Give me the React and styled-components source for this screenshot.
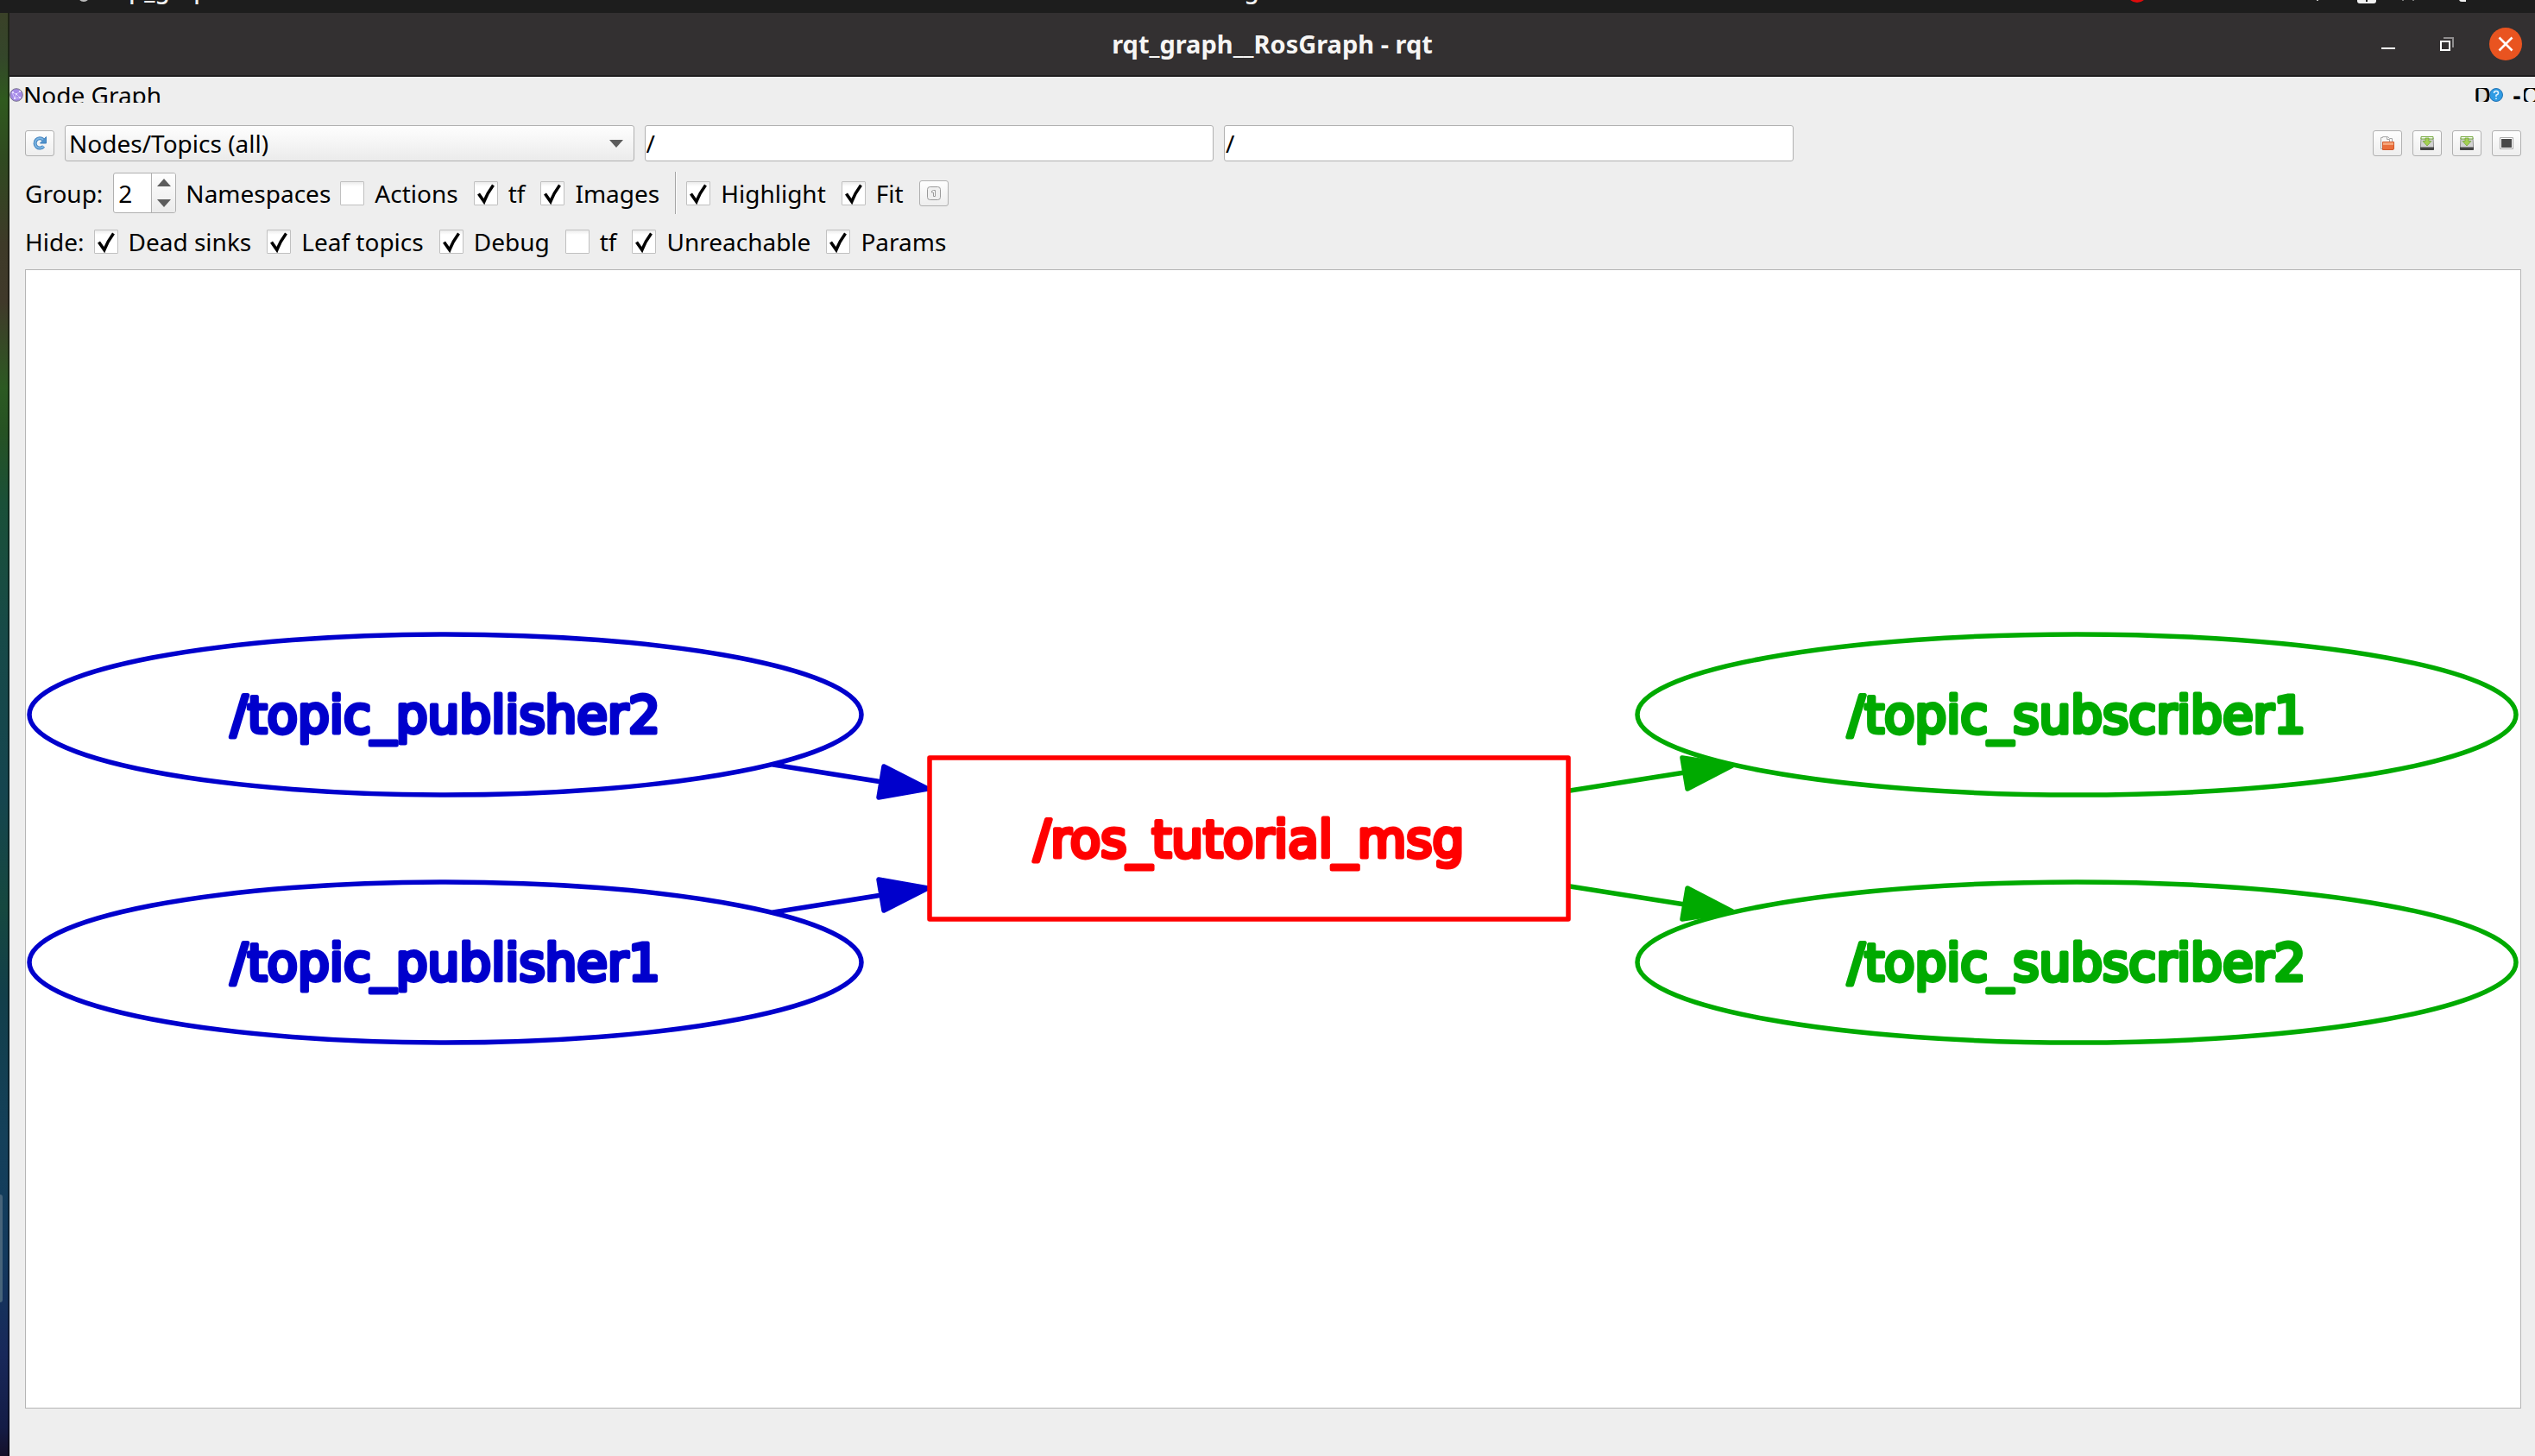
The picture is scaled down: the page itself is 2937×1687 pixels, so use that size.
import React from "react";
import styled, { createGlobalStyle, css } from "styled-components";

const GlobalStyle = createGlobalStyle`
  * { box-sizing: border-box; }
  html, body, #root { height: 100%; margin: 0; }
  body {
    overflow: hidden;
    background: #1d1d1d;
    color: #000;
    font: 28px/36px "Noto Sans", "Open Sans", sans-serif;
  }
  button, input, select { font: inherit; color: inherit; margin: 0; }
`;

const Desktop = styled.div`
  display: flex;
  flex-direction: column;
  height: 100vh;
`;

const SystemBar = styled.header`
  flex: none;
  display: grid;
  grid-template-columns: 1fr auto 1fr;
  grid-template-rows: 100%;
  align-items: end;
  height: 15px;
  padding: 0 80px 10px 90px;
  overflow: hidden;
  background: #1d1d1d;
  color: #f2f2f2;
`;

const BarGroup = styled.div`
  display: flex;
  align-items: flex-end;
  gap: 24px;
  justify-content: ${(p) => (p.$end ? "flex-end" : "flex-start")};
  font-weight: 500;
  line-height: 36px;
`;

const Clock = styled(BarGroup)`
  min-width: 136px;
`;

const TrayDrawing = styled.svg`
  display: block;
  width: 460px;
  height: 15px;
  margin-bottom: -10px;
`;

const Workspace = styled.div`
  flex: 1;
  display: flex;
  min-height: 0;
`;

const Wallpaper = styled.aside`
  flex: none;
  display: flex;
  align-items: flex-start;
  width: 11px;
  border-right: 2px solid rgba(0, 0, 0, 0.45);
  background: linear-gradient(
    #3a4128 0%, #34462a 3%, #2f5a1e 6%, #2f4a20 10%, #3e3a28 16%, #40392a 20%,
    #2c5a22 26%, #265223 29%, #1a5038 34%, #174a48 43%, #15454f 54%, #16483f 62%,
    #123f4a 68%, #14405a 78%, #133a5e 86%, #18285a 93%, #141c46 98%, #15102a 100%
  );
`;

const DockEdge = styled.div`
  width: 3px;
  height: 125px;
  margin-top: 1369px;
  border-radius: 0 4px 4px 0;
  background: #47647a;
`;

const Window = styled.main`
  flex: 1;
  display: flex;
  flex-direction: column;
  min-width: 0;
  background: #eeeeee;
`;

const TitleBar = styled.div`
  flex: none;
  display: grid;
  grid-template-columns: 1fr auto 1fr;
  align-items: center;
  height: 74px;
  padding: 0 15px;
  background: #333031;
  border-bottom: 2px solid #1f1d1e;
  color: #f6f5f4;
`;

const Title = styled.h1`
  grid-column: 2;
  margin: 0;
  font-size: 29px;
  font-weight: 700;
`;

const WindowButtons = styled.div`
  display: flex;
  justify-content: flex-end;
  gap: 30px;
`;

const WindowButton = styled.button`
  width: 38px;
  height: 38px;
  padding: 0;
  border: 0;
  border-radius: 50%;
  background: ${(p) => (p.$close ? "#e95420" : "transparent")};
  svg { display: block; }
`;

const DockTitle = styled.div`
  flex: none;
  display: flex;
  align-items: center;
  height: 18px;
  margin-top: 12px;
  overflow: hidden;
`;

const DockName = styled.span`
  flex: 1;
  line-height: 18px;
`;

const DockButtons = styled.div`
  display: flex;
  align-items: center;
  margin-right: -3px;
`;

const DockButton = styled.button`
  display: flex;
  align-items: center;
  justify-content: center;
  width: 16px;
  height: 16px;
  padding: 0;
  border: 0;
  border-radius: 3px;
  overflow: hidden;
  font-weight: ${(p) => (p.$spaced ? "700" : "500")};
  line-height: 16px;
  background: ${(p) => (p.$raised ? "#dcdcdc" : "transparent")};
  margin-left: ${(p) => (p.$spaced ? "8px" : "0")};
`;

const Content = styled.div`
  flex: 1;
  display: flex;
  flex-direction: column;
  min-height: 0;
  padding: 26px 16px 55px 18px;
`;

const FilterRow = styled.div`
  display: flex;
  align-items: center;
  height: 42px;
`;

const FilterFields = styled.div`
  flex: 1;
  display: grid;
  grid-template-columns: repeat(4, 1fr);
  gap: 12px;
  margin-left: 12px;
`;

const field = css`
  width: 100%;
  height: 42px;
  border: 1px solid #b0b0b0;
  border-radius: 3px;
  outline: 0;
`;

const SelectWrap = styled.div`
  display: grid;
  align-items: center;
  svg { grid-area: 1 / 1; justify-self: end; margin-right: 13px; pointer-events: none; }
`;

const GraphSelect = styled.select`
  ${field}
  grid-area: 1 / 1;
  appearance: none;
  padding: 0 4px;
  background: linear-gradient(#fefefe, #ebebeb);
`;

const TextField = styled.input`
  ${field}
  padding: 0 1px;
  background: #fff;
`;

const ToolButtons = styled.div`
  display: flex;
  gap: 12px;
`;

const ToolButton = styled.button`
  flex: none;
  display: flex;
  align-items: center;
  justify-content: center;
  width: 34px;
  height: 30px;
  padding: 0;
  border: 1px solid #b0b0b0;
  border-radius: 3px;
  background: linear-gradient(#fefefe, #eeeeee);
`;

const OptionRow = styled.div`
  display: flex;
  align-items: center;
  gap: 18px;
  height: ${(p) => p.$height};
  margin-top: ${(p) => p.$top};
`;

const SpinBox = styled.div`
  display: flex;
  width: 73px;
  height: 47px;
  border: 1px solid #b0b0b0;
  border-radius: 3px;
  overflow: hidden;
  background: #fff;
`;

const SpinInput = styled.input`
  flex: 1;
  min-width: 0;
  padding: 0 5px;
  border: 0;
  outline: 0;
  background: transparent;
`;

const SpinArrows = styled.div`
  display: flex;
  flex-direction: column;
  width: 28px;
  border-left: 1px solid #b0b0b0;
  background: linear-gradient(#fefefe, #ebebeb);
`;

const SpinArrow = styled.button`
  flex: 1;
  display: flex;
  align-items: center;
  justify-content: center;
  padding: 0;
  border: 0;
  background: transparent;
`;

const CheckLabel = styled.label`
  display: flex;
  align-items: center;
  gap: 12px;
  white-space: nowrap;
`;

const CheckBox = styled.span`
  display: grid;
  width: 28px;
  height: 28px;
  border: 1px solid #c0c0c0;
  border-radius: 1px;
  background: linear-gradient(#ececec, #ffffff 5px);
  input { grid-area: 1 / 1; appearance: none; width: 26px; height: 26px; margin: 0; }
  svg { grid-area: 1 / 1; pointer-events: none; visibility: hidden; }
  input:checked + svg { visibility: visible; }
`;

const Divider = styled.div`
  width: 2px;
  height: 49px;
  border-left: 1px solid #a4a4a4;
  border-right: 1px solid #fafafa;
`;

const OptionGroup = styled.div`
  display: flex;
  align-items: center;
  gap: 11px;
`;

const GraphView = styled.section`
  flex: 1;
  min-height: 0;
  margin-top: 14px;
  border: 1px solid #b5b5b5;
  background: #fff;
`;

const GraphDrawing = styled.svg`
  display: block;
  width: 100%;
  height: 100%;
`;

const NodeShape = styled.g`
  fill: none;
  stroke: ${(p) => p.$color};
  stroke-linejoin: round;
  stroke-linecap: round;
`;

const NodeLabel = styled.text`
  fill: ${(p) => p.$color};
  stroke: ${(p) => p.$color};
  stroke-width: 5px;
  stroke-linejoin: round;
  text-anchor: middle;
  font: 58px "DejaVu Sans", sans-serif;
`;

const BLUE = "#0000cc";
const GREEN = "#00aa00";
const RED = "#ff0000";

const NODES = [
  { name: "/topic_publisher2", x: 486, y: 515, rx: 482, color: BLUE },
  { name: "/topic_publisher1", x: 486, y: 802, rx: 482, color: BLUE },
  { name: "/topic_subscriber1", x: 2376, y: 515, rx: 509, color: GREEN },
  { name: "/topic_subscriber2", x: 2376, y: 802, rx: 509, color: GREEN },
];

const EDGES = [
  { color: BLUE, line: "M866 573L992 593", head: "994,575 1045,601 988,611" },
  { color: BLUE, line: "M866 744L992 724", head: "994,742 1045,716 988,706" },
  { color: GREEN, line: "M1789 603L1922 582", head: "1919,565 1977,574 1925,601" },
  { color: GREEN, line: "M1789 714L1922 735", head: "1919,752 1977,743 1925,716" },
];

function Triangle({ up }) {
  return (
    <svg width="16" height="10" viewBox="0 0 16 10" aria-hidden="true">
      <path d={up ? "M0 9L8 0L16 9Z" : "M0 1L8 10L16 1Z"} fill="#5c5c5c" />
    </svg>
  );
}

function Check({ label, checked }) {
  return (
    <CheckLabel>
      <CheckBox>
        <input type="checkbox" defaultChecked={checked} />
        <svg width="26" height="26" viewBox="0 0 26 26" aria-hidden="true">
          <path d="M4.500 13.500L10.800 22.500C13.500 15.500 17 9.500 21.500 3.500" fill="none" stroke="#000" strokeWidth="3.6" />
        </svg>
      </CheckBox>
      {label}
    </CheckLabel>
  );
}

function SaveIcon() {
  return (
    <svg width="16" height="16" viewBox="0 0 16 16" aria-hidden="true">
      <path d="M1 2H15L15.600 12V15Q15.600 15.600 15 15.600H1Q0.400 15.600 0.400 15V12Z" fill="#d2d2d2" stroke="#7d7d7d" strokeWidth="0.8" />
      <path d="M0 12.500H16V15Q16 16 15 16H1Q0 16 0 15Z" fill="#444" />
      <path d="M1 0.500H15V3H1Z" fill="#fff" stroke="#6fa537" />
      <path d="M6 2H10V5.500H13L8 11L3 5.500H6Z" fill="#a5d053" stroke="#6b9f30" strokeWidth="0.7" />
    </svg>
  );
}

export default function App() {
  return (
    <>
      <GlobalStyle />
      <Desktop>
        <SystemBar>
          <BarGroup>
            <svg width="14" height="20" viewBox="0 0 14 20" aria-hidden="true">
              <circle cx="7" cy="10" r="7" fill="#bdbdbd" />
            </svg>
            rqt_graph
          </BarGroup>
          <Clock>Aug</Clock>
          <BarGroup $end>
            <TrayDrawing viewBox="0 0 460 15" aria-hidden="true">
              <circle cx="79" cy="-9" r="12" fill="#e00b0b" />
              <rect x="287" y="-5" width="2" height="6" fill="#bbb" />
              <rect x="334" y="-12" width="22" height="16" rx="3" fill="#f2f2f2" />
              <path d="M344 0h2v2h-2z" fill="#1d1d1d" />
              <path d="M387 -2v3M399 -2v3" stroke="#777" strokeWidth="2" />
              <rect x="452" y="-12" width="18" height="14" rx="3" fill="#f2f2f2" />
            </TrayDrawing>
          </BarGroup>
        </SystemBar>
        <Workspace>
          <Wallpaper>
            <DockEdge />
          </Wallpaper>
          <Window>
            <TitleBar>
              <Title>rqt_graph__RosGraph - rqt</Title>
              <WindowButtons>
                <WindowButton aria-label="Minimize">
                  <svg width="38" height="38" viewBox="0 0 38 38">
                    <path d="M11 23H27V25H11Z" fill="#fff" />
                  </svg>
                </WindowButton>
                <WindowButton aria-label="Restore">
                  <svg width="38" height="38" viewBox="0 0 38 38">
                    <path d="M15 12H26V23" fill="none" stroke="#8f8d8e" strokeWidth="2" />
                    <path d="M12 16H22V26H12Z" fill="none" stroke="#fff" strokeWidth="2" />
                  </svg>
                </WindowButton>
                <WindowButton $close aria-label="Close">
                  <svg width="38" height="38" viewBox="0 0 38 38">
                    <path d="M11.500 11.500L26.500 26.500M26.500 11.500L11.500 26.500" stroke="#fff" strokeWidth="2.6" />
                  </svg>
                </WindowButton>
              </WindowButtons>
            </TitleBar>
            <DockTitle>
              <svg width="16" height="16" viewBox="0 0 16 16" aria-hidden="true">
                <circle cx="8" cy="8" r="7.300" fill="#a58ae6" stroke="#77728c" />
                <path d="M3 5L8 7L12 4M8 7L6 12L12 11L8 7M3 5L6 12" fill="none" stroke="#d9ccff" strokeWidth="0.8" />
                <path d="M3 4h2v2H3zM7 6h2v2H7zM11 3h2v2h-2zM5 11h2v2H5zM11 10h2v2h-2z" fill="#e6dcff" />
              </svg>
              <DockName>Node Graph</DockName>
              <DockButtons>
                <DockButton $raised>D</DockButton>
                <DockButton aria-label="Help">
                  <svg width="16" height="16" viewBox="0 0 16 16">
                    <circle cx="8" cy="8" r="7.500" fill="#2f9ce4" stroke="#2774b4" />
                    <path d="M5.500 6Q5.500 3.500 8 3.500T10.500 6Q10.500 7.500 8 8.300V10M8 11.500V13" fill="none" stroke="#e6f5ff" strokeWidth="1.5" />
                  </svg>
                </DockButton>
                <DockButton $spaced>-</DockButton>
                <DockButton>O</DockButton>
              </DockButtons>
            </DockTitle>
            <Content>
              <FilterRow>
                <ToolButton aria-label="Refresh">
                  <svg width="16" height="16" viewBox="0 0 16 16">
                    <path d="M12.500 11.500A5.600 5.600 0 1 1 12 3.800" fill="none" stroke="#3f7fbc" strokeWidth="4" />
                    <path d="M15.500 0.500V8H8.500Z" fill="#4f93cd" stroke="#3f7fbc" />
                    <path d="M12.500 11.500A5.600 5.600 0 1 1 12 3.800" fill="none" stroke="#7cb5e2" strokeWidth="2" />
                  </svg>
                </ToolButton>
                <FilterFields>
                  <SelectWrap>
                    <GraphSelect aria-label="Graph type">
                      <option>Nodes/Topics (all)</option>
                    </GraphSelect>
                    <Triangle />
                  </SelectWrap>
                  <TextField aria-label="Node filter" defaultValue="/" />
                  <TextField aria-label="Topic filter" defaultValue="/" />
                </FilterFields>
                <ToolButtons>
                  <ToolButton aria-label="Open">
                    <svg width="16" height="16" viewBox="0 0 16 16">
                      <path d="M2.500 14.500H0.500V1.500H2.500V0.500H8.500L10.500 2.500H13.500V8" fill="#f8f8f8" stroke="#a6a6a6" />
                      <path d="M7.500 0.500V3.500H10.500V6" fill="none" stroke="#a6a6a6" />
                      <path d="M2.500 6.500H15.500V14Q15.500 15.500 14 15.500H2.500Z" fill="#ea6f3c" stroke="#d2592a" />
                      <path d="M3 7H15V10H3Z" fill="#f6a57a" />
                    </svg>
                  </ToolButton>
                  <ToolButton aria-label="Save as DOT">
                    <SaveIcon />
                  </ToolButton>
                  <ToolButton aria-label="Save as SVG">
                    <SaveIcon />
                  </ToolButton>
                  <ToolButton aria-label="Save as image">
                    <svg width="16" height="14" viewBox="0 0 16 14">
                      <path d="M0.500 0.500H15.500V13.500H0.500Z" fill="#fff" stroke="#a8a8a8" />
                      <path d="M2 2H14V12H2Z" fill="#484848" />
                    </svg>
                  </ToolButton>
                </ToolButtons>
              </FilterRow>

              <OptionRow $height="49px" $top="12px">
                <OptionGroup>
                  <CheckLabel>
                    Group:
                    <SpinBox>
                      <SpinInput defaultValue="2" />
                      <SpinArrows>
                        <SpinArrow aria-label="Increase" tabIndex={-1}><Triangle up /></SpinArrow>
                        <SpinArrow aria-label="Decrease" tabIndex={-1}><Triangle /></SpinArrow>
                      </SpinArrows>
                    </SpinBox>
                  </CheckLabel>
                  <span>Namespaces</span>
                  <Check label="Actions" />
                </OptionGroup>
                <Check label="tf" checked />
                <Check label="Images" checked />
                <OptionGroup>
                  <Divider />
                  <Check label="Highlight" checked />
                </OptionGroup>
                <Check label="Fit" checked />
                <ToolButton aria-label="Fit in view">
                  <svg width="16" height="16" viewBox="0 0 16 16">
                    <rect x="0.500" y="0.500" width="15" height="15" rx="3" fill="#f0f0f0" stroke="#999" />
                    <path d="M5.500 5.500L7.500 4.500H9.500V11.500H7.500V7H5.500Z" fill="#fff" stroke="#999" />
                  </svg>
                </ToolButton>
              </OptionRow>

              <OptionRow $height="36px" $top="14px">
                <OptionGroup>
                  <span>Hide:</span>
                  <Check label="Dead sinks" checked />
                </OptionGroup>
                <Check label="Leaf topics" checked />
                <Check label="Debug" checked />
                <Check label="tf" />
                <Check label="Unreachable" checked />
                <Check label="Params" checked />
              </OptionRow>

              <GraphView aria-label="Node graph">
                <GraphDrawing viewBox="0 0 2890 1318">
                  {NODES.map((n) => (
                    <g key={n.name}>
                      <NodeShape $color={n.color} strokeWidth="5.500">
                        <ellipse cx={n.x} cy={n.y} rx={n.rx} ry="93" />
                      </NodeShape>
                      <NodeLabel $color={n.color} x={n.x} y={n.y + 21}>{n.name}</NodeLabel>
                    </g>
                  ))}
                  {EDGES.map((e) => (
                    <NodeShape key={e.line} $color={e.color} strokeWidth="5.500">
                      <path d={e.line} />
                      <polygon points={e.head} fill={e.color} />
                    </NodeShape>
                  ))}
                  <NodeShape $color={RED} strokeWidth="5.500">
                    <rect x="1047" y="565" width="740" height="187" />
                  </NodeShape>
                  <NodeLabel $color={RED} x="1417" y="680">/ros_tutorial_msg</NodeLabel>
                </GraphDrawing>
              </GraphView>
            </Content>
          </Window>
        </Workspace>
      </Desktop>
    </>
  );
}
